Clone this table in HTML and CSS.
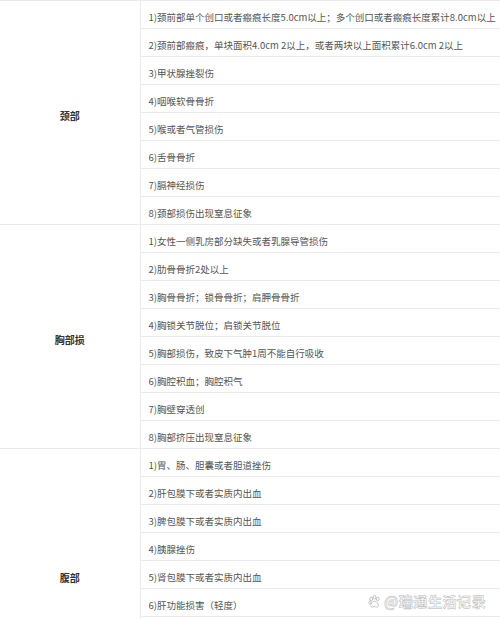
FILE: index.html
```html
<!DOCTYPE html>
<html lang="zh">
<head>
<meta charset="utf-8">
<link rel="stylesheet" href="styles.css">
</head>
<body>
<div class="page">
<table class="tbl">
  <colgroup><col class="c1"><col class="c2"></colgroup>
  <tbody>
    <tr><td class="label" rowspan="8">颈部</td><td>1)颈前部单个创口或者瘢痕长度5.0cm以上；多个创口或者瘢痕长度累计8.0cm以上</td></tr>
    <tr><td>2)颈前部瘢痕，单块面积4.0cm 2以上，或者两块以上面积累计6.0cm 2以上</td></tr>
    <tr><td>3)甲状腺挫裂伤</td></tr>
    <tr><td>4)咽喉软骨骨折</td></tr>
    <tr><td>5)喉或者气管损伤</td></tr>
    <tr><td>6)舌骨骨折</td></tr>
    <tr><td>7)膈神经损伤</td></tr>
    <tr><td>8)颈部损伤出现窒息征象</td></tr>
    <tr><td class="label" rowspan="8">胸部损</td><td>1)女性一侧乳房部分缺失或者乳腺导管损伤</td></tr>
    <tr><td>2)肋骨骨折2处以上</td></tr>
    <tr><td>3)胸骨骨折；锁骨骨折；肩胛骨骨折</td></tr>
    <tr><td>4)胸锁关节脱位；肩锁关节脱位</td></tr>
    <tr><td>5)胸部损伤，致皮下气肿1周不能自行吸收</td></tr>
    <tr><td>6)胸腔积血；胸腔积气</td></tr>
    <tr><td>7)胸壁穿透创</td></tr>
    <tr><td>8)胸部挤压出现窒息征象</td></tr>
    <tr><td class="label" rowspan="9">腹部</td><td>1)胃、肠、胆囊或者胆道挫伤</td></tr>
    <tr><td>2)肝包膜下或者实质内出血</td></tr>
    <tr><td>3)脾包膜下或者实质内出血</td></tr>
    <tr><td>4)胰腺挫伤</td></tr>
    <tr><td>5)肾包膜下或者实质内出血</td></tr>
    <tr><td>6)肝功能损害（轻度）</td></tr>
    <tr><td>7)急性肾功能障碍（可恢复）</td></tr>
    <tr><td>8)腹腔积血</td></tr>
    <tr><td>9)腹膜后血肿</td></tr>
  </tbody>
</table>
<div class="watermark">
  <svg class="paw" width="13" height="13" viewBox="0 0 20 20"><g fill="#fff" stroke="#b5b5b5" stroke-width="1.3"><ellipse cx="5" cy="6" rx="2.2" ry="2.8"/><ellipse cx="10" cy="3.6" rx="2.2" ry="2.8"/><ellipse cx="15" cy="6" rx="2.2" ry="2.8"/><ellipse cx="3" cy="11.5" rx="1.8" ry="2.3"/><path d="M10 9.5c-3 0-6 4.5-6 6.8 0 1.8 1.6 2.4 3 2.2 1.3-.2 2-.6 3-.6s1.7.4 3 .6c1.4.2 3-.4 3-2.2 0-2.3-3-6.8-6-6.8z"/></g></svg>
  <span class="wm-text">@瑞通生活记录</span>
</div>
</div>
</body>
</html>
```
FILE: styles.css
```css
html, body {
  margin: 0;
  padding: 0;
  background: #fff;
}
.page {
  position: relative;
  width: 500px;
  height: 619px;
  overflow: hidden;
}
.tbl {
  width: 500px;
  border-collapse: collapse;
  table-layout: fixed;
  font-family: "Noto Sans CJK SC", "Noto Sans", sans-serif;
}
.c1 { width: 140px; }
.c2 { width: 360px; }
.tbl td {
  border-top: 1px solid #ebebeb;
  border-bottom: 1px solid #ebebeb;
  padding: 10px 4px 4px 8px;
  line-height: 13px;
  height: 13px;
  font-size: 9.5px;
  color: #555;
  white-space: nowrap;
  overflow: hidden;
}
.tbl td.label {
  border-right: 1px solid #ebebeb;
  text-align: center;
  vertical-align: middle;
  padding: 5px 0 0 0;
  font-size: 10px;
  font-weight: bold;
  color: #333;
}
.watermark {
  position: absolute;
  left: 368px;
  top: 591px;
  display: flex;
  align-items: center;
  gap: 3px;
}
.wm-text {
  font-family: "Noto Sans CJK SC", sans-serif;
  font-size: 14px;
  font-weight: bold;
  color: #fafafa;
  -webkit-text-stroke: 0.5px #b8b8b8;
  letter-spacing: 0.6px;
}
```
